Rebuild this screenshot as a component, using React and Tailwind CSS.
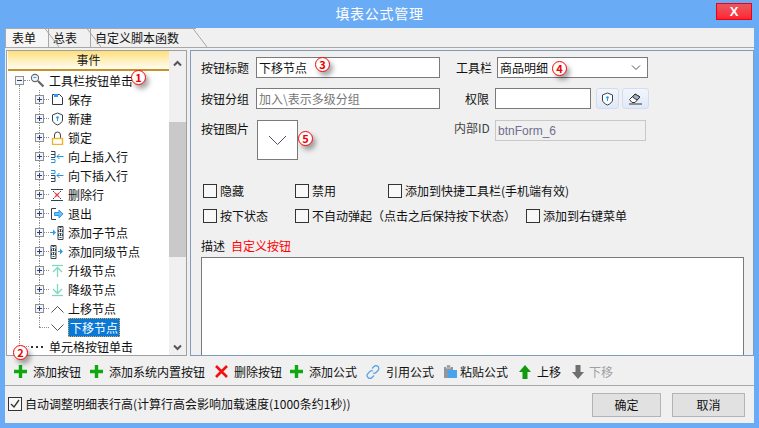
const font = { fontFamily: '"Noto Sans CJK SC", "Liberation Sans", sans-serif' };

const S = ({ w = 14, h = 14, children, className = "" }) => (
  <svg width={w} height={h} viewBox={`0 0 ${w} ${h}`} fill="none" className={`shrink-0 ${className}`}>{children}</svg>
);

const icons = {
  root: (
    <S w={15} h={16}>
      <circle cx="5" cy="5" r="3.6" stroke="#666" strokeWidth="1.1" fill="#eef5fb" />
      <path d="M8 8l5.5 5.5" stroke="#666" strokeWidth="2.2" />
      <path d="M3.4 4.5h3" stroke="#39f" strokeWidth="1" />
    </S>
  ),
  save: (
    <S w={13} h={13}>
      <path d="M1.5 1.5h7l3 3v7h-10z" stroke="#2b3a4a" fill="#fff" />
      <rect x="3" y="1" width="4" height="3" fill="#39f" />
    </S>
  ),
  shield: (
    <S w={13} h={14}>
      <path d="M6.5 1l5 2v5c0 2-2.500 4-5 5-2.500-1-5-3-5-5V3z" stroke="#33414f" fill="#fff" />
      <circle cx="6.500" cy="5.500" r="1.300" fill="#2b9be8" />
      <path d="M6.500 6v3" stroke="#2b9be8" />
    </S>
  ),
  lock: (
    <S w={13} h={14}>
      <path d="M3.500 7V4a3 3 0 0 1 6 0v3" stroke="#444" />
      <rect x="1.500" y="7.500" width="10" height="6" stroke="#f0b429" fill="#fff" strokeWidth="1.400" />
    </S>
  ),
  insertUp: (
    <S w={14} h={14}>
      <path d="M1 1.500h4v3H1M1 4.500h4v3H1" stroke="#33414f" />
      <path d="M1 9.500h4v3H1" stroke="#1e96f0" />
      <path d="M13.500 6.500H7M9.500 4l-2.500 2.500L9.500 9" stroke="#1e96f0" />
    </S>
  ),
  insertDown: (
    <S w={14} h={14}>
      <path d="M1 1.500h4v3H1" stroke="#1e96f0" />
      <path d="M1 6.500h4v3H1M1 9.500h4v3H1" stroke="#33414f" />
      <path d="M13.500 6.500H7M9.500 4l-2.500 2.500L9.500 9" stroke="#1e96f0" />
    </S>
  ),
  del: (
    <S w={14} h={14}>
      <path d="M1 1.500h12M1 12.500h12" stroke="#33414f" />
      <path d="M3 3l1.500 1.500M11 3L9.500 4.500M3 11l1.500-1.500M11 11L9.500 9.500" stroke="#33414f" />
      <path d="M5 5l4 4M9 5l-4 4" stroke="#ef3b3b" strokeWidth="1.200" />
    </S>
  ),
  exit: (
    <S w={14} h={14}>
      <path d="M6 1.500H1.500v11H6" stroke="#33414f" />
      <path d="M4.500 5.500H9V3l4 4-4 4V8.500H4.500z" fill="#6cc0f5" stroke="#2b9be8" />
    </S>
  ),
  addChild: (
    <S w={14} h={14}>
      <path d="M0 6.500h3" stroke="#2b9be8" />
      <path d="M3 3.500l3 3-3 3z" fill="#2b9be8" />
      <path d="M8 .5h5v13H8z" fill="#fff" stroke="#33414f" />
      <path d="M8 5h5M8 9h5M10.500 1v12" stroke="#33414f" strokeDasharray="1 1" strokeWidth="2" />
    </S>
  ),
  addSibling: (
    <S w={14} h={14}>
      <path d="M1 .5h5v13H1z" fill="#fff" stroke="#33414f" />
      <path d="M1 5h5M1 9h5M3.500 1v12" stroke="#33414f" strokeDasharray="1 1" strokeWidth="2" />
      <path d="M8 6.500h2" stroke="#2b9be8" />
      <path d="M10 3.500l3 3-3 3z" fill="#2b9be8" />
    </S>
  ),
  levelUp: (
    <S w={13} h={14}>
      <path d="M1 1.500h11" stroke="#80d8c0" strokeWidth="1.300" />
      <path d="M6.500 13V3.500M2 8l4.500-4.500L11 8" stroke="#80d8c0" strokeWidth="1.300" />
    </S>
  ),
  levelDown: (
    <S w={13} h={14}>
      <path d="M1 12.500h11" stroke="#80d8c0" strokeWidth="1.300" />
      <path d="M6.500 1v9.500M2 6l4.500 4.500L11 6" stroke="#80d8c0" strokeWidth="1.300" />
    </S>
  ),
  up: (
    <S w={13} h={8}>
      <path d="M.5 7.500l6-6 6 6" stroke="#4a5560" />
    </S>
  ),
  down: (
    <S w={13} h={8}>
      <path d="M.5 .5l6 6 6-6" stroke="#4a5560" />
    </S>
  ),
  dots: (
    <S w={13} h={4}>
      <rect x="0" y="1" width="2" height="2" fill="#333" />
      <rect x="5" y="1" width="2" height="2" fill="#333" />
      <rect x="10" y="1" width="2" height="2" fill="#333" />
    </S>
  ),
};

const Expander = ({ minus }) => (
  <span className="relative block w-[9px] h-[9px] border border-[#8f8f8f] bg-[#f4f4f4] shrink-0">
    <span className="absolute left-[1px] top-[3px] w-[5px] h-[1px] bg-[#27408b]" />
    {!minus && <span className="absolute left-[3px] top-[1px] w-[1px] h-[5px] bg-[#27408b]" />}
  </span>
);

const Badge = ({ n, className = "" }) => (
  <span className={`absolute z-10 flex w-[15px] h-[15px] items-center justify-center rounded-full border-[1.5px] border-[#f00] bg-white text-[11px] font-bold leading-none text-[#e00] shadow-[3px_4px_5px_rgba(0,0,0,0.35)] ${className}`}>{n}</span>
);

const children = [
  ["保存", "save"], ["新建", "shield"], ["锁定", "lock"], ["向上插入行", "insertUp"], ["向下插入行", "insertDown"],
  ["删除行", "del"], ["退出", "exit"], ["添加子节点", "addChild"], ["添加同级节点", "addSibling"], ["升级节点", "levelUp"],
  ["降级节点", "levelDown"], ["上移节点", "up"],
];

const VDots = ({ className = "" }) => <span className={`absolute w-0 border-l border-dotted border-[#8f8f8f] ${className}`} />;
const HDots = ({ className = "" }) => <span className={`absolute h-0 border-t border-dotted border-[#8f8f8f] ${className}`} />;

const Tree = () => (
  <div className="relative flex w-[181px] shrink-0 border border-[#a0a0a0] bg-white pl-[1px]">
    <div className="relative min-w-0 flex-1 overflow-hidden">
      <div className="flex h-[20px] items-center justify-center border-b-2 border-[#c8912c] bg-gradient-to-b from-[#ffdf7a] to-[#fffdf2] text-[#222]">事件</div>
      <div>
        <div className="relative flex h-[19px] items-center">
          <span className="ml-[7px]"><Expander minus /></span>
          <HDots className="left-[16px] top-[9px] w-[6px]" />
          <VDots className="left-[11px] top-[14px] h-[6px]" />
          <span className="ml-[6px]">{icons.root}</span>
          <span className="ml-[4px] whitespace-nowrap">工具栏按钮单击</span>
        </div>
        {children.map(([t, ic]) => (
          <div key={t} className="relative flex h-[19px] items-center">
            <VDots className="left-[11px] top-0 h-[19px]" />
            <span className="ml-[27px]"><Expander /></span>
            <VDots className="left-[31px] top-0 h-[5px]" />
            <VDots className="left-[31px] top-[14px] h-[5px]" />
            <HDots className="left-[36px] top-[9px] w-[5px]" />
            <span className="flex w-[14px] ml-[6px] items-center justify-center">{icons[ic]}</span>
            <span className="ml-[4px] whitespace-nowrap">{t}</span>
          </div>
        ))}
        <div className="relative flex h-[19px] items-center">
          <VDots className="left-[11px] top-0 h-[19px]" />
          <VDots className="left-[31px] top-0 h-[9px]" />
          <HDots className="left-[31px] top-[9px] w-[10px]" />
          <span className="ml-[42px] flex w-[14px] items-center justify-center">{icons.down}</span>
          <span className="ml-[4px] whitespace-nowrap border border-dotted border-[#e8a33a] bg-[#0a78d6] px-[1px] leading-[17px] text-white">下移节点</span>
        </div>
        <div className="relative flex h-[19px] items-center">
          <VDots className="left-[11px] top-0 h-[9px]" />
          <HDots className="left-[11px] top-[9px] w-[10px]" />
          <span className="ml-[22px] flex w-[14px] items-center justify-center">{icons.dots}</span>
          <span className="ml-[5px] whitespace-nowrap">单元格按钮单击</span>
        </div>
      </div>
    </div>
    <div className="flex w-[17px] shrink-0 flex-col justify-between bg-[#f0f0f0] pt-[9px] pb-[3px]">
      <div className="flex h-[8px] justify-center"><S w={9} h={7}><path d="M1 5.500l3.500-3.500L8 5.500" stroke="#555" strokeWidth="2" /></S></div>
      <div className="absolute right-0 top-[71px] h-[135px] w-[17px] bg-[#c9c9c9]" />
      <div className="flex h-[8px] justify-center"><S w={9} h={7}><path d="M1 1.500L4.500 5 8 1.500" stroke="#555" strokeWidth="2" /></S></div>
    </div>
    <Badge n="1" className="left-[124px] top-[19px]" />
    <Badge n="2" className="left-[6px] top-[294px]" />
  </div>
);

const Input = ({ className = "", children }) => (
  <div className={`flex h-[21px] items-center border border-[#7a7a7a] bg-white px-[2px] ${className}`}>{children}</div>
);

const Check = ({ label, on, className = "" }) => (
  <label className={`flex items-center gap-[3px] whitespace-nowrap ${className}`}>
    <span className="flex h-[14px] w-[14px] shrink-0 items-center justify-center border border-[#333] bg-[#f8f8f8]">
      {on && <S w={10} h={10}><path d="M1 5l3 3 5-7" stroke="#333" strokeWidth="1.300" /></S>}
    </span>
    {label}
  </label>
);

const Label = ({ children, className = "" }) => <span className={`whitespace-nowrap ${className}`}>{children}</span>;

const IconBtn = ({ children, className = "" }) => (
  <button className={`flex h-[21px] items-center justify-center rounded-[3px] border border-[#d3dcf0] bg-gradient-to-b from-[#f2f5fc] to-[#e0e9f8] ${className}`}>{children}</button>
);

const Form = () => (
  <div className="flex min-w-0 flex-1 flex-col overflow-hidden border border-[#7f9db9] pl-[10px] pt-[6px]">
    <div className="relative flex h-[21px] items-center">
      <Label className="w-[55px]">按钮标题</Label>
      <Input className="w-[184px]">下移节点</Input>
      <Badge n="3" className="left-[114px] top-0" />
      <Label className="ml-[16px] w-[41px]">工具栏</Label>
      <Input className="w-[151px] justify-between">
        商品明细
        <S w={12} h={8} className="mr-[3px]"><path d="M2 1.500l4 4 4-4" stroke="#555" /></S>
      </Input>
      <Badge n="4" className="left-[351px] top-[4px]" />
    </div>
    <div className="mt-[10px] flex h-[21px] items-center">
      <Label className="w-[55px]">按钮分组</Label>
      <Input className="w-[184px] text-[#777]">加入\表示多级分组</Input>
      <Label className="ml-[25px] w-[30px]">权限</Label>
      <Input className="w-[96px]" />
      <IconBtn className="ml-[5px] w-[23px]">{icons.shield}</IconBtn>
      <IconBtn className="ml-[3px] w-[27px]">
        <S w={15} h={13}>
          <path d="M1.500 7.500L7 2l5 3-5 5.500H4z" stroke="#333" fill="#fff" />
          <path d="M7 2l5 3-3 3-4.500-3z" fill="#9fb0c4" stroke="#333" />
          <path d="M1 12h13" stroke="#333" />
        </S>
      </IconBtn>
    </div>
    <div className="relative mt-[11px] flex h-[40px]">
      <Label className="mt-[3px] w-[56px]">按钮图片</Label>
      <div className="flex h-[40px] w-[41px] items-center justify-center border border-[#7a7a7a] bg-white">
        <S w={19} h={11}><path d="M1 1l8.500 8.500L18 1" stroke="#4a5560" /></S>
      </div>
      <Badge n="5" className="left-[97px] top-[11px]" />
      <Label className="ml-[156px] mt-[2px] w-[41px] text-[#444]">内部ID</Label>
      <div className="flex h-[21px] w-[151px] items-center border border-[#c8c8c8] bg-[#f0f0f0] px-[2px] text-[#6f6f8f]" style={{ fontFamily: '"Liberation Sans", sans-serif' }}>btnForm_6</div>
    </div>
    <div className="mt-[24px] flex h-[14px] items-center">
      <Check label="隐藏" className="w-[92px] ml-[2px]" />
      <Check label="禁用" className="w-[93px]" />
      <Check label="添加到快捷工具栏(手机端有效)" />
    </div>
    <div className="mt-[11px] flex h-[14px] items-center">
      <Check label="按下状态" className="w-[92px] ml-[2px]" />
      <Check label="不自动弹起（点击之后保持按下状态）" className="w-[231px]" />
      <Check label="添加到右键菜单" />
    </div>
    <div className="mt-[17px] flex h-[14px] items-center">
      <span>描述</span>
      <span className="ml-[6px] text-[#f00]">自定义按钮</span>
    </div>
    <div className="mt-[5px] h-[120px] w-[543px] shrink-0 border border-[#7a7a7a] bg-white" />
  </div>
);

const Plus = () => (
  <S w={13} h={13}><path d="M6.500 0v13M0 6.500h13" stroke="#0fa80f" strokeWidth="3.400" /></S>
);

const toolbar = [
  { t: "添加按钮", i: <Plus />, w: 76, g: 6 },
  { t: "添加系统内置按钮", i: <Plus />, w: 125, g: 6 },
  { t: "删除按钮", i: <S w={13} h={13}><path d="M1 1l11 11M12 1L1 12" stroke="#f01010" strokeWidth="2.600" /></S>, w: 75, g: 6 },
  { t: "添加公式", i: <Plus />, w: 76, g: 6 },
  {
    t: "引用公式",
    i: (
      <S w={14} h={14}>
        <path d="M6 3.500l2-2a2.500 2.500 0 0 1 4 4l-2 2a2.500 2.500 0 0 1-3 .5M8 10.500l-2 2a2.500 2.500 0 0 1-4-4l2-2a2.500 2.500 0 0 1 3-.5" stroke="#5aa5e8" strokeWidth="1.300" />
      </S>
    ),
    w: 77,
    g: 6,
  },
  {
    t: "粘贴公式",
    i: (
      <S w={15} h={15}>
        <path d="M1 3h9v11H1z" fill="#8e979f" />
        <rect x="3.500" y="1" width="4" height="3" fill="#8e979f" stroke="#f0f0f0" strokeWidth=".6" />
        <rect x="5" y="6" width="9" height="8" fill="#46a3ec" />
      </S>
    ),
    w: 76,
    g: 2,
  },
  { t: "上移", i: <S w={12} h={14}><path d="M6 0l6 7H8.500v7h-5V7H0z" fill="#0f9a0f" /></S>, w: 53, g: 6 },
  { t: "下移", i: <S w={12} h={14}><path d="M6 14l6-7H8.500V0h-5v7H0z" fill="#6f6f6f" /></S>, w: 46, g: 5, off: true },
];

export default function App() {
  return (
    <div className="flex h-[428px] w-[759px] flex-col overflow-hidden bg-[#6aabf5] px-[5px] pb-[5px] text-[12px] leading-none text-[#111]" style={font}>
      <div className="relative flex h-[28px] shrink-0 items-center justify-center text-[14px] tracking-[0.7px] text-white">
        <span className="-mt-[3px]">填表公式管理</span>
        <button className="absolute right-[2px] top-[3px] flex h-[17px] w-[36px] items-center justify-center border border-[#f00010] bg-gradient-to-b from-[#e85660] to-[#ff2030] text-[13px] font-bold tracking-normal text-white" style={{ fontFamily: '"Liberation Sans", sans-serif' }}>X</button>
      </div>
      <div className="flex min-h-0 flex-1 flex-col bg-[#f0f0f0]">
        <div className="mb-[2px] flex h-[20px] shrink-0 items-end border-b border-[#a8a8a8]">
          {[
            { t: "表单", w: 43, px: 6 },
            { t: "总表", w: 42, px: 4 },
            { t: "自定义脚本函数", w: 106, px: 4 },
          ].map(({ t, w, px }, i) => (
            <div key={t} className={`relative flex h-[19px] items-center border-t border-l border-[#a8a8a8] ${i === 0 ? "bg-[#f6f6f6]" : ""}`} style={{ width: w, paddingLeft: px }}>
              <span className="whitespace-nowrap">{t}</span>
              <svg width="14" height="19" viewBox="0 0 14 19" className="absolute -right-[11px] -top-[1px] z-10" fill="none"><path d="M0 .5L14 19" stroke="#a8a8a8" /></svg>
            </div>
          ))}
        </div>
        <div className="flex h-[306px] shrink-0 gap-[3px] pl-[1px]">
          <Tree />
          <Form />
        </div>
        <div className="flex h-[30px] shrink-0 items-center border-b border-[#a8a8a8] pl-[9px] pt-[2px]">
          {toolbar.map(({ t, i, w, g, off }) => (
            <div key={t} className={`flex shrink-0 items-center ${off ? "text-[#a0a0a0]" : ""}`} style={{ width: w, gap: g }}>
              {i}
              <span className="whitespace-nowrap">{t}</span>
            </div>
          ))}
        </div>
        <div className="flex min-h-0 flex-1 items-center pl-[3px] pr-[9px]">
          <Check on label="自动调整明细表行高(计算行高会影响加载速度(1000条约1秒))" className="-mt-[2px]" />
          <div className="ml-auto flex gap-[11px]">
            <button className="h-[24px] w-[69px] border border-[#b4b4b4] bg-[#e1e1e1]">确定</button>
            <button className="h-[24px] w-[73px] border border-[#b4b4b4] bg-[#e1e1e1]">取消</button>
          </div>
        </div>
      </div>
    </div>
  );
}
